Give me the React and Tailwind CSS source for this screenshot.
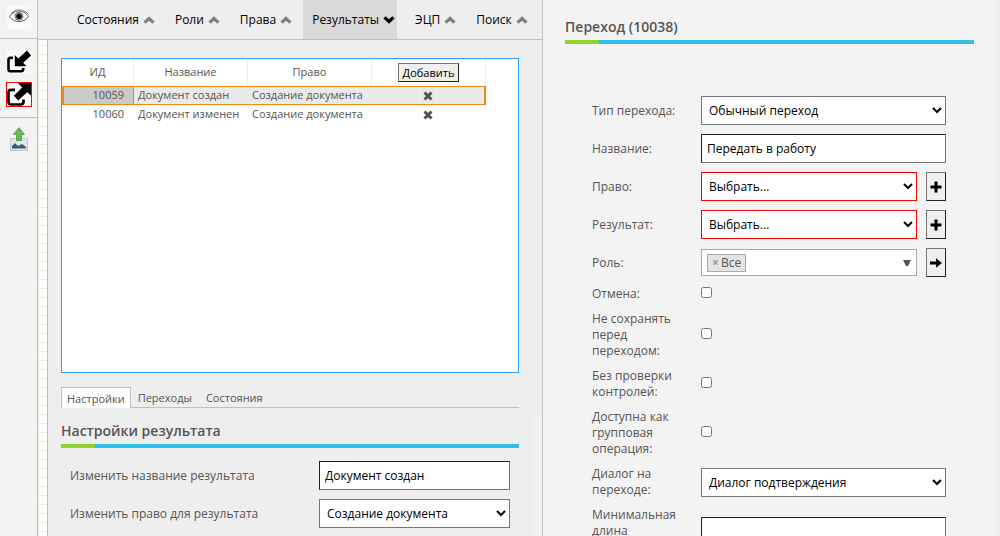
import React, { useState } from 'react';

const menu = [
  { id: 'states', label: 'Состояния' },
  { id: 'roles', label: 'Роли' },
  { id: 'rights', label: 'Права' },
  { id: 'results', label: 'Результаты' },
  { id: 'sign', label: 'ЭЦП' },
  { id: 'search', label: 'Поиск' },
];

const results = [
  { id: 10059, name: 'Документ создан', right: 'Создание документа' },
  { id: 10060, name: 'Документ изменен', right: 'Создание документа' },
];

const inputClass =
  'h-[29px] w-full border border-t-[#222] border-l-[#222] border-r-[#767676] border-b-[#767676] bg-white px-[5px] text-black';
const selectClass = 'h-[29px] w-full border border-[#767676] bg-white px-[3px] text-black';
const requiredSelectClass = 'h-[29px] w-full border border-[#f00] bg-white px-[3px] text-black';
const checkboxClass = 'mb-[3px] size-[11px]';
const buttonClass =
  'border border-t-[#767676] border-l-[#767676] border-r-[#222] border-b-[#222] bg-[#efefef] text-black';

function Chevron({ down }) {
  return (
    <svg viewBox="0 0 12 8" className={down ? 'h-2 w-3 rotate-180 text-black' : 'h-2 w-3 text-[#808080]'}>
      <path d="M6 .3 11.600 5.600 9.400 7.800 6 4.800 2.600 7.800.4 5.600Z" fill="currentColor" />
    </svg>
  );
}

function EyeIcon() {
  return (
    <svg viewBox="0 0 24 24" className="size-6" fill="none" stroke="#555">
      <path fill="#fafafa" stroke="none" d="M0 0h24v24H0z" />
      <path d="M2.500 11.500C5.500 7.500 8.500 6 12 6S18.500 7.500 21.500 11.500C18.500 15.500 15.500 16.500 12 16.500S5.500 15.500 2.500 11.500Z" />
      <path d="M4 8.500C7 5.500 10 4.600 13 4.800S19 6.500 21 9" strokeWidth=".6" />
      <circle cx="12" cy="11.300" r="4" fill="#aaa" strokeWidth=".7" />
      <circle cx="12" cy="11.300" r="2.400" fill="#111" stroke="#111" />
    </svg>
  );
}

function ImportIcon() {
  return (
    <svg viewBox="0 0 24 24" className="size-6">
      <path fill="#fafafa" d="M0 0h24v24H0z" />
      <path d="M6 7.800H3.500Q1.500 7.800 1.500 10V19Q1.500 21.200 3.500 21.200H14Q16.200 21.200 16.200 19V18" fill="none" stroke="#000" strokeWidth="2.600" />
      <path d="M7.800 5V16.300H19.300L16.200 12.800 24 5.500 20 .6 11.300 8.500Z" />
    </svg>
  );
}

function ExportIcon() {
  return (
    <svg viewBox="0 0 24 24" className="size-6">
      <path fill="#fff" d="M0 0h24v24H0z" />
      <path d="M8 6.800H4Q1.500 6.800 1.500 9.300V18.500Q1.500 21.500 4 21.500H13.500Q16.500 21.500 16.500 18.500V16.500" fill="none" stroke="#000" strokeWidth="2.700" />
      <path d="M11 0H24V12.500L20.200 9.200 11.200 17.500 6.800 12.800 15.200 4.600Z" />
    </svg>
  );
}

function UploadIcon() {
  return (
    <svg viewBox="0 0 18 24" className="h-6 w-[18px]">
      <path d="M.5 11.500H17.500V23.500H.5Z" fill="#dfe7ec" stroke="#c5c5c5" />
      <path d="M2 21.500V19L5 16 8 19 10 18 12 17 16 20V21.500Z" fill="#38597d" />
      <path d="M9 .7 14.500 7.500H11.500V13.500H6.500V7.500H3.500Z" fill="#6abb59" stroke="#55a646" />
    </svg>
  );
}

function CrossIcon() {
  return (
    <svg viewBox="0 0 10 10" className="size-[10px]">
      <path d="M1.500 1.500 8.500 8.500M8.500 1.500 1.500 8.500" stroke="#505050" strokeWidth="2.900" />
    </svg>
  );
}

function PlusIcon() {
  return (
    <svg viewBox="0 0 12 12" className="size-3">
      <path d="M6 .5V11.500M.5 6H11.500" stroke="#000" strokeWidth="3" />
    </svg>
  );
}

function ArrowIcon() {
  return (
    <svg viewBox="0 0 12 12" className="size-3">
      <path d="M0 4.500H6V1.200L12 6 6 10.800V7.500H0Z" />
    </svg>
  );
}

function Heading({ children }) {
  return (
    <header>
      <h2 className="text-sm leading-5 font-semibold">{children}</h2>
      <div className="mt-[3px] flex h-1 bg-[#2fbfe9]">
        <div className="w-[34px] bg-[#8fd32f]"></div>
      </div>
    </header>
  );
}

function Row({ id, label, action, children }) {
  return (
    <div className="flex items-center">
      <label htmlFor={id} className="w-[109px] shrink-0 pr-4 leading-4">{label}</label>
      <div className="flex min-w-0 flex-1 items-center gap-[9px]">
        <div className="flex min-w-0 flex-1 items-center">{children}</div>
        {action}
      </div>
    </div>
  );
}

function SideButton({ label, children }) {
  return (
    <button type="button" aria-label={label} className={`${buttonClass} flex h-[29px] w-5 items-center justify-center`}>
      {children}
    </button>
  );
}

function Toolbar() {
  return (
    <aside className="flex w-[38px] shrink-0 flex-col border-r border-[#c0c0c0] bg-[#f3f3f3]">
      <div className="flex h-[39px] justify-center border-b border-[#c0c0c0] pt-[5px]">
        <button type="button" aria-label="Просмотр" className="size-6"><EyeIcon /></button>
      </div>
      <div className="flex h-[79px] flex-col items-center gap-2 border-b border-[#c0c0c0] pt-[11px]">
        <button type="button" aria-label="Входящий" className="size-6"><ImportIcon /></button>
        <button type="button" aria-label="Исходящий" className="h-[25px] w-[26px] overflow-hidden border border-[#f00]"><ExportIcon /></button>
      </div>
      <div className="flex justify-center pt-[9px]">
        <button type="button" aria-label="Загрузить"><UploadIcon /></button>
      </div>
    </aside>
  );
}

function ResultsTable() {
  return (
    <div className="h-[315px] border border-[#2f9ff5] bg-white text-[11px]">
      <table className="w-[424px] table-fixed border-separate border-spacing-0">
        <colgroup>
          <col className="w-[72px]" />
          <col className="w-[114px]" />
          <col className="w-[124px]" />
          <col className="w-[114px]" />
        </colgroup>
        <thead>
          <tr className="h-[27px]">
            <th className="border-r border-[#eee] font-normal">ИД</th>
            <th className="border-r border-[#eee] font-normal">Название</th>
            <th className="border-r border-[#eee] font-normal">Право</th>
            <th className="border-r border-[#eee] font-normal">
              <button type="button" className={`${buttonClass} mx-auto block h-[19px] px-1 leading-4`}>Добавить</button>
            </th>
          </tr>
        </thead>
        <tbody>
          {results.map((r, i) => (
            <tr key={r.id} className={i === 0 ? 'h-[19px] bg-[#eaeaea] outline outline-[#f08a10] -outline-offset-1' : 'h-[19px]'}>
              <td className={i === 0 ? 'border-r border-l-2 border-[#f08a10] bg-[#cacaca] pr-[9px] text-right' : 'pr-[10px] text-right'}>{r.id}</td>
              <td className="pl-1 whitespace-nowrap">{r.name}</td>
              <td className="pl-1 whitespace-nowrap">{r.right}</td>
              <td className={i === 0 ? 'border-r-2 border-[#f08a10]' : 'pr-[2px]'}>
                <button type="button" aria-label="Удалить" className="mx-auto block"><CrossIcon /></button>
              </td>
            </tr>
          ))}
        </tbody>
      </table>
    </div>
  );
}

function ResultsPanel() {
  const [name, setName] = useState('Документ создан');

  return (
    <main className="flex min-w-0 flex-1 flex-col border-l border-[#c0c0c0] pt-[18px] pl-[13px]">
      <div className="pr-[23px]">
        <ResultsTable />
        <div className="mt-[14px] flex items-end border-b border-[#c0c0c0] text-[11px]">
          <button type="button" className="-mb-px h-[21px] border border-b-0 border-[#c0c0c0] bg-white px-[5px] pt-[3px]">Настройки</button>
          <button type="button" className="h-5 px-[7px] pt-[3px]">Переходы</button>
          <button type="button" className="h-5 px-[7px] pt-[3px]">Состояния</button>
        </div>
      </div>
      <div className="mt-[9px] flex flex-1">
        <section className="min-w-0 flex-1 pt-[4px] pr-[14px]">
          <Heading>Настройки результата</Heading>
          <div className="mt-[13px] flex flex-col gap-[9px] pr-[9px] pl-[9px]">
            <div className="flex items-center">
              <label htmlFor="result-name" className="flex-1 whitespace-nowrap">Изменить название результата</label>
              <input id="result-name" value={name} onChange={(e) => setName(e.target.value)} className={`${inputClass} max-w-[191px]`} />
            </div>
            <div className="flex items-center">
              <label htmlFor="result-right" className="flex-1 whitespace-nowrap">Изменить право для результата</label>
              <select id="result-right" className={`${selectClass} max-w-[191px]`}>
                <option>Создание документа</option>
              </select>
            </div>
          </div>
        </section>
        <div className="w-[9px] bg-[#f1f1f1]"></div>
      </div>
    </main>
  );
}

function TransitionPanel() {
  const [title, setTitle] = useState('Передать в работу');

  return (
    <aside className="h-screen w-[458px] shrink-0 overflow-hidden border-l border-[#c0c0c0] bg-[#f3f3f3]">
      <div className="min-h-full border-r-4 border-[#eee] pt-[17px] pr-[22px] pl-[22px]">
        <Heading>Переход (10038)</Heading>
        <form className="mt-[52px] flex flex-col gap-[9px] pr-7 pl-[27px]">
          <Row id="type" label="Тип перехода:">
            <select id="type" className={selectClass}>
              <option>Обычный переход</option>
            </select>
          </Row>
          <Row id="title" label="Название:">
            <input id="title" value={title} onChange={(e) => setTitle(e.target.value)} className={inputClass} />
          </Row>
          <Row id="right" label="Право:" action={<SideButton label="Добавить право"><PlusIcon /></SideButton>}>
            <select id="right" className={requiredSelectClass}>
              <option>Выбрать...</option>
            </select>
          </Row>
          <Row id="result" label="Результат:" action={<SideButton label="Добавить результат"><PlusIcon /></SideButton>}>
            <select id="result" className={requiredSelectClass}>
              <option>Выбрать...</option>
            </select>
          </Row>
          <Row id="role" label="Роль:" action={<SideButton label="Перейти к роли"><ArrowIcon /></SideButton>}>
            <button id="role" type="button" className="flex h-[27px] w-full items-center justify-between border border-[#aaa] bg-white px-[5px]">
              <span className="flex h-[18px] items-center gap-[2px] border border-[#aaa] bg-[#e4e4e4] px-1">
                <span className="font-bold text-[#999]">×</span>
                Все
              </span>
              <svg viewBox="0 0 8 6" className="h-[6px] w-2">
                <path d="M0 0H8L5 6H3Z" fill="#555" />
              </svg>
            </button>
          </Row>
          <Row id="cancel" label="Отмена:">
            <input id="cancel" type="checkbox" className={checkboxClass} />
          </Row>
          <Row id="no-save" label="Не сохранять перед переходом:">
            <input id="no-save" type="checkbox" className={checkboxClass} />
          </Row>
          <Row id="no-check" label="Без проверки контролей:">
            <input id="no-check" type="checkbox" className={checkboxClass} />
          </Row>
          <Row id="group" label="Доступна как групповая операция:">
            <input id="group" type="checkbox" className={checkboxClass} />
          </Row>
          <Row id="dialog" label="Диалог на переходе:">
            <select id="dialog" className={selectClass}>
              <option>Диалог подтверждения</option>
            </select>
          </Row>
          <Row id="min-length" label="Минимальная длина комментария:">
            <input id="min-length" className={inputClass} />
          </Row>
        </form>
      </div>
    </aside>
  );
}

export default function App() {
  const [active, setActive] = useState('results');

  return (
    <div className="flex h-screen overflow-hidden bg-[#eee] font-['Open_Sans',sans-serif] text-xs text-[#555]">
      <Toolbar />
      <div className="flex min-w-0 flex-1 flex-col">
        <nav className="flex h-10 shrink-0 gap-[9px] border-b border-[#c0c0c0] pl-[30px] font-medium text-black">
          {menu.map((m) => (
            <button
              key={m.id}
              type="button"
              onClick={() => setActive(m.id)}
              className={m.id === active ? 'flex items-center gap-1 bg-[#d9d9d9] pr-[2px] pl-[9px]' : 'flex items-center gap-1 pr-[2px] pl-[9px]'}
            >
              {m.label}
              <Chevron down={m.id === active} />
            </button>
          ))}
        </nav>
        <div className="flex min-h-0 flex-1">
          <div className="w-[9px] shrink-0 bg-white bg-[linear-gradient(#e6edda_1px,transparent_1px),linear-gradient(90deg,#e6edda_1px,transparent_1px)] bg-[size:9px_9px] bg-[position:0_5px]"></div>
          <ResultsPanel />
        </div>
      </div>
      <TransitionPanel />
    </div>
  );
}
